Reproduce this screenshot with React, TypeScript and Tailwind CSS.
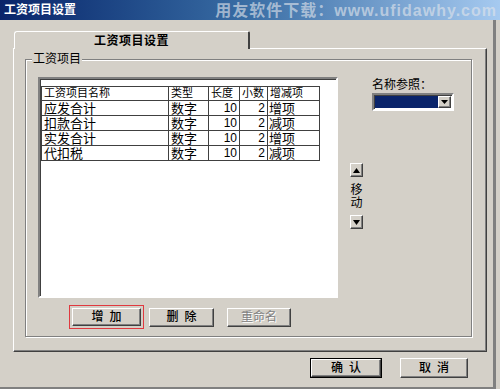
import React from 'react';

const FONT = "font-['Liberation_Sans','Noto_Sans_CJK_SC',sans-serif]";

// classic raised 3D edge
const RAISED =
  'bg-[#d4d0c8] border border-t-white border-l-white border-r-[#404040] border-b-[#404040] shadow-[inset_-1px_-1px_0_#808080]';

const ROWS = [
  { name: '应发合计', type: '数字', len: 10, dec: 2, kind: '增项' },
  { name: '扣款合计', type: '数字', len: 10, dec: 2, kind: '减项' },
  { name: '实发合计', type: '数字', len: 10, dec: 2, kind: '增项' },
  { name: '代扣税', type: '数字', len: 10, dec: 2, kind: '减项' },
];

const COLS = ['w-[127px]', 'w-[40px]', 'w-[31px]', 'w-[28px]', 'w-[52px]'];

function Cell({ w, right, children, className = '' }: { w: string; right?: boolean; children: React.ReactNode; className?: string }) {
  return (
    <div
      className={`${w} shrink-0 border-r border-b border-[#404040] px-[2px] flex items-center ${right ? 'justify-end' : ''} ${className}`}
    >
      {children}
    </div>
  );
}

function SmallArrow({ up }: { up?: boolean }) {
  return (
    <div className={`w-[13px] h-[14px] ${RAISED} flex items-center justify-center`}>
      <svg width="7" height="5" viewBox="0 0 7 5">
        {up ? <polygon points="3.5,0 7,5 0,5" fill="#000" /> : <polygon points="0,0 7,0 3.5,5" fill="#000" />}
      </svg>
    </div>
  );
}

export default function App() {
  return (
    <div className={`w-[500px] h-[389px] bg-[#d4d0c8] flex flex-col overflow-hidden ${FONT}`}>
      {/* Title bar */}
      <div className="h-[20px] shrink-0 flex items-center bg-gradient-to-r from-[#0a246a] via-[#3a6ea5] to-[#a6caf0] pl-[4px] pr-[3px]">
        <span className="text-white font-bold text-[12px] leading-none">工资项目设置</span>
        <span className="ml-auto text-[16px] font-bold leading-none tracking-[1px] text-[#dfe3ea]/65 pt-[2px]">
          用友软件下载：www.ufidawhy.com
        </span>
      </div>

      <div className="flex-1 flex flex-col pl-[13px] pt-[11px] border-r-[3px] border-r-[#808080] border-b-[2px] border-b-[#808080] mr-[4px]">
        {/* Tab */}
        <div className="ml-[1px] w-[236px] h-[18px] -mb-px relative z-10 bg-[#d4d0c8] rounded-tl-[3px] rounded-tr-[2px] border-t border-l border-r-2 border-t-white border-l-white border-r-[#404040] flex items-center justify-center">
          <span className="text-[12px] font-bold leading-none tracking-[0.5px] text-black">工资项目设置</span>
        </div>

        {/* Tab panel */}
        <div className={`w-[474px] h-[304px] ${RAISED} pl-[11px] pt-[10px]`}>
          {/* Group box */}
          <div className="relative w-[447px] h-[278px] border border-[#808080] shadow-[inset_1px_1px_0_#fff,1px_1px_0_#fff] pl-[12px] pt-[17px]">
            <span className="absolute left-[6px] -top-[8px] bg-[#d4d0c8] px-[1px] text-[12px] leading-[14px] text-black">
              工资项目
            </span>

            <div className="flex">
              {/* List */}
              <div className="w-[300px] h-[221px] bg-white border-2 border-t-[#808080] border-l-[#808080] border-r-white border-b-white shadow-[inset_1px_1px_0_#404040] pl-[1px] pt-[1px]">
                <div className="inline-flex flex-col border-l border-t border-[#404040] text-black">
                  <div className="flex h-[14px] text-[11px] leading-none">
                    <Cell w={COLS[0]}>工资项目名称</Cell>
                    <Cell w={COLS[1]}>类型</Cell>
                    <Cell w={COLS[2]}>长度</Cell>
                    <Cell w={COLS[3]}>小数</Cell>
                    <Cell w={COLS[4]}>增减项</Cell>
                  </div>
                  {ROWS.map(r => (
                    <div key={r.name} className="flex h-[15px] text-[13px] leading-none">
                      <Cell w={COLS[0]}>{r.name}</Cell>
                      <Cell w={COLS[1]}>{r.type}</Cell>
                      <Cell w={COLS[2]} right className="text-[12px]">{r.len}</Cell>
                      <Cell w={COLS[3]} right className="text-[12px]">{r.dec}</Cell>
                      <Cell w={COLS[4]} className="pl-[1px]">{r.kind}</Cell>
                    </div>
                  ))}
                </div>
              </div>

              {/* Move arrows */}
              <div className="ml-[12px] w-[13px] pt-[86px] flex flex-col items-center">
                <SmallArrow up />
                <div className="mt-[7px] mb-[5px] flex flex-col items-center text-[12px] leading-[13px] text-black">
                  <span>移</span>
                  <span>动</span>
                </div>
                <SmallArrow />
              </div>

              {/* Name reference */}
              <div className="ml-[9px] pt-[1px] flex flex-col">
                <span className="text-[12px] leading-[14px] text-black">名称参照：</span>
                <div className="mt-[1px] w-[82px] h-[18px] bg-white border-2 border-t-[#808080] border-l-[#808080] border-r-white border-b-white shadow-[inset_1px_1px_0_#404040] flex p-[1px]">
                  <div className="flex-1 bg-[#0a246a]" />
                  <div className={`w-[13px] ${RAISED} flex items-center justify-center`}>
                    <svg width="7" height="4" viewBox="0 0 7 4">
                      <polygon points="0,0 7,0 3.5,4" fill="#000" />
                    </svg>
                  </div>
                </div>
              </div>
            </div>

            {/* Buttons */}
            <div className="mt-[7px] pl-[31px] flex items-center">
              <div className="w-[75px] h-[24px] border border-[#e0393f] p-[2px]">
                <div className={`w-full h-full ${RAISED} flex items-center justify-center text-[12px] font-medium leading-none tracking-[6px] pl-[6px] text-black`}>
                  增加
                </div>
              </div>
              <div className={`ml-[5px] w-[65px] h-[19px] ${RAISED} flex items-center justify-center text-[12px] font-medium leading-none tracking-[6px] pl-[6px] text-black`}>
                删除
              </div>
              <div className={`ml-[13px] w-[64px] h-[19px] ${RAISED} flex items-center justify-center text-[12px] leading-none text-[#808080] [text-shadow:1px_1px_0_#fff]`}>
                重命名
              </div>
            </div>
          </div>
        </div>

        {/* OK / Cancel */}
        <div className="w-[474px] mt-[6px] flex justify-end pr-[19px] gap-[18px]">
          <div className="w-[72px] h-[20px] border border-black">
            <div className={`w-full h-full ${RAISED} flex items-center justify-center text-[12px] font-medium leading-none tracking-[6px] pl-[6px] text-black`}>
              确认
            </div>
          </div>
          <div className={`w-[68px] h-[20px] ${RAISED} flex items-center justify-center text-[12px] font-medium leading-none tracking-[6px] pl-[6px] text-black`}>
            取消
          </div>
        </div>
      </div>
    </div>
  );
}
